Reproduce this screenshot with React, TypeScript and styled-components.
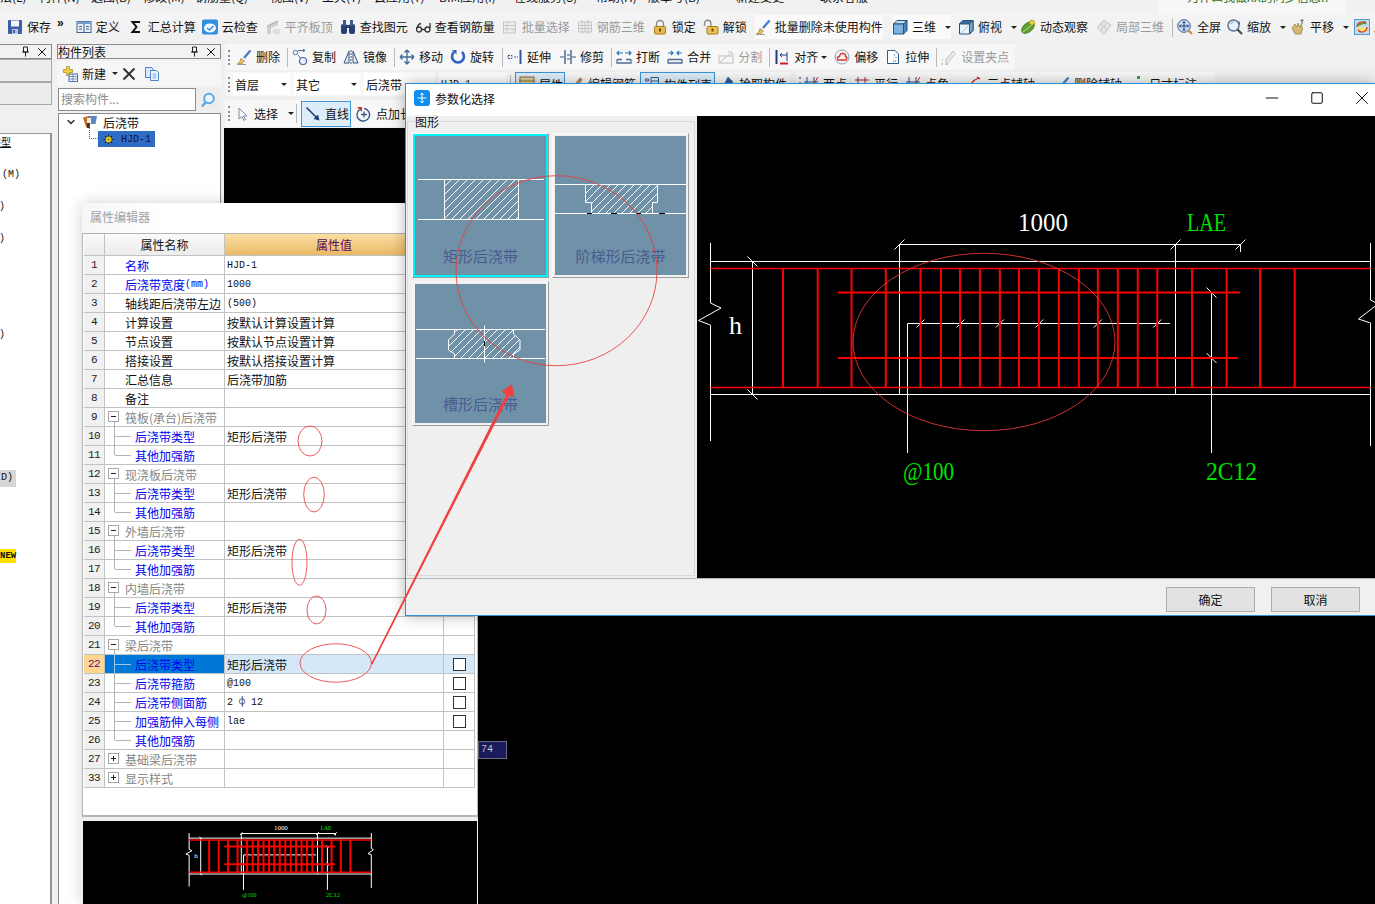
import React from "react";
import styled, { createGlobalStyle } from "styled-components";
import { ChevronDown, Minus, Square, X } from "lucide-react";

const CJK = `"Noto Sans CJK SC", "Noto Sans", sans-serif`;
const MONO = `"Liberation Mono", "DejaVu Sans Mono", "Noto Sans CJK SC", monospace`;

const Global = createGlobalStyle`
  html, body { margin: 0; padding: 0; background: #f0f0f0; }
  body { font-family: ${CJK}; font-size: 12px; color: #111; }
`;

const Screen = styled.div`
  position: relative;
  width: 1375px;
  height: 904px;
  overflow: hidden;
  display: flex;
  flex-direction: column;
  background: #f0f0f0;
`;

/* ---------- menu strip (cut off by the top of the picture) ---------- */
const MenuStrip = styled.div`
  height: 14px;
  flex: none;
  display: flex;
  overflow: hidden;
  position: relative;
  background: #f1f1f1;
`;
const MenuItem = styled.span<{ $x: number }>`
  flex: none;
  width: ${(p) => p.$x}px;
  margin-top: -12px;
  height: 18px;
  line-height: 18px;
  white-space: nowrap;
`;
const NewsBox = styled.div`
  position: absolute;
  left: 1158px;
  top: 0;
  width: 187px;
  height: 14px;
  background: #f7f7f7;
  overflow: hidden;
`;
const NewsText = styled.div`
  margin: -12px 0 0 29px;
  line-height: 18px;
  color: #2c6e12;
  white-space: nowrap;
`;

/* ---------- toolbars ---------- */
const MainBar = styled.div`
  height: 28px;
  box-sizing: border-box;
  padding: 0 0 2px 7px;
  flex: none;
  display: flex;
  align-items: center;
  background: linear-gradient(#f4f4f4, #f0f0f0);
  white-space: nowrap;
`;
const Tool = styled.div<{ $muted?: boolean; $after?: number; $white?: boolean }>`
  flex: none;
  display: inline-flex;
  align-items: center;
  gap: 4px;
  margin-right: ${(p) => p.$after ?? 7}px;
  height: 24px;
  color: ${(p) => (p.$muted ? "#9a9a9a" : "#141414")};
  background: ${(p) => (p.$white ? "#fafafa" : "transparent")};
  line-height: 16px;
  white-space: nowrap;
`;
const ToolGlyph = styled.svg<{ $small?: boolean }>`
  flex: none;
  width: ${(p) => (p.$small ? 11 : 16)}px;
  height: ${(p) => (p.$small ? 11 : 16)}px;
  display: block;
`;
const Caret = styled.i<{ $off?: number }>`
  flex: none;
  width: 0;
  height: 0;
  margin-left: ${(p) => p.$off ?? 5}px;
  border: 3px solid transparent;
  border-top: 3px solid #222;
  border-bottom: 0;
`;
const Sep = styled.i`
  flex: none;
  width: 1px;
  height: 19px;
  margin-right: 4px;
  background: #b9b9b9;
`;
const Grip = styled.i<{ $after?: number }>`
  flex: none;
  width: 0;
  height: 15px;
  margin: 0 ${(p) => p.$after ?? 6}px 0 3px;
  border-left: 2px dotted #8e8e8e;
`;
const More = styled.span`
  font: bold 12px "Liberation Sans", sans-serif;
  width: 8px;
  margin: -8px 12px 0 0;
`;
const LabelGap = styled.span`
  margin-left: 3px;
`;

const Workspace = styled.div`
  flex: 1;
  min-height: 0;
  display: flex;
  padding-top: 2px;
`;

/* ---------- docks ---------- */
const FarDock = styled.div`
  flex: none;
  width: 52px;
  display: flex;
  flex-direction: column;
`;
const DockHead = styled.div<{ $open?: boolean }>`
  flex: none;
  height: 13px;
  display: flex;
  align-items: center;
  justify-content: flex-end;
  gap: 5px;
  padding-right: 2px;
  border: 1px solid #8a8a8a;
  border-left-width: ${(p) => (p.$open ? 0 : 1)}px;
  line-height: 13px;
  background: #f2f2f2;
`;
const DockTitle = styled.span`
  margin-right: auto;
  font-size: 12px;
`;
const DockButton = styled.div`
  flex: none;
  height: 21px;
  border: 1px solid #a8a8a8;
  border-left: 0;
  background: #ececec;
`;
const FarList = styled.div`
  flex: 1;
  margin-top: 28px;
  border-top: 1px solid #9a9a9a;
  border-right: 2px solid #8e949c;
  background: #fff;
  display: flex;
  flex-direction: column;
  align-items: flex-start;
  overflow: hidden;
`;
const Cut = styled.span<{ $top: number; $left?: number; $gray?: boolean; $new?: boolean; $under?: boolean }>`
  margin-top: ${(p) => p.$top}px;
  margin-left: ${(p) => p.$left ?? 0}px;
  padding: ${(p) => (p.$gray ? "1px 3px 1px 0" : "0")};
  height: ${(p) => (p.$gray ? 15 : 14)}px;
  line-height: 14px;
  font-family: ${MONO};
  font-size: ${(p) => (p.$new ? 9 : 10)}px;
  font-weight: ${(p) => (p.$new ? 700 : 400)};
  background: ${(p) => (p.$gray ? "#d6d6d6" : p.$new ? "#ffe000" : "transparent")};
  text-decoration: ${(p) => (p.$under ? "underline" : "none")};
  white-space: nowrap;
`;

const ListDock = styled.div`
  flex: none;
  width: 164px;
  margin-left: 5px;
  display: flex;
  flex-direction: column;
`;
const ListBar = styled.div`
  flex: none;
  height: 25px;
  margin: 2px 0 1px;
  display: flex;
  align-items: center;
  padding-left: 5px;
  background: #f6f6f6;
`;
const Search = styled.div`
  flex: none;
  height: 23px;
  margin: 1px 1px 2px;
  display: flex;
`;
const SearchInput = styled.div`
  width: 138px;
  box-sizing: border-box;
  border: 1px solid #8a8a8a;
  background: #fff;
  padding-left: 2px;
  color: #8c8c8c;
  line-height: 20px;
  font-size: 12px;
`;
const SearchBtn = styled.div`
  flex: 1;
  display: flex;
  align-items: center;
  justify-content: center;
  background: #ededed;
`;
const Tree = styled.div`
  flex: 1;
  margin-left: 1px;
  border: 1px solid #8a8a8a;
  border-width: 1px 1px 0;
  background: #fff;
  padding: 0 0 0 6px;
`;
const TreeRow = styled.div`
  height: 16px;
  display: flex;
  align-items: center;
  gap: 5px;
`;
const TreeLeaf = styled.div`
  width: 57px;
  box-sizing: border-box;
  height: 16px;
  margin: 1px 0 0 33px;
  padding-left: 5px;
  display: flex;
  align-items: center;
  gap: 7px;
  background: #2f6dc4;
  color: #10103a;
  font: 10px ${MONO};
  position: relative;
  &::before {
    content: "";
    position: absolute;
    left: -9px;
    top: -6px;
    width: 8px;
    height: 13px;
    border-left: 1px dotted #666;
    border-bottom: 1px dotted #666;
  }
`;

/* ---------- drawing area ---------- */
const DrawArea = styled.div`
  flex: 1;
  min-width: 0;
  margin-left: 3px;
  display: flex;
  flex-direction: column;
`;
const Bar = styled.div<{ $h: number; $top?: number; $w?: number }>`
  flex: none;
  height: ${(p) => p.$h}px;
  width: ${(p) => (p.$w ? `${p.$w}px` : "auto")};
  margin: ${(p) => p.$top ?? 0}px 0 0 1px;
  display: flex;
  align-items: center;
  background: #f7f7f7;
  border-radius: 2px;
  white-space: nowrap;
`;
const BarLine = styled.div`
  flex: none;
  display: flex;
  margin-top: 2px;
  height: 24px;
`;
const SecondBar = styled(Bar)`
  margin-left: 6px;
  margin-top: 0;
  overflow: hidden;
`;
const Combo = styled.div<{ $w: number }>`
  flex: none;
  width: ${(p) => p.$w}px;
  box-sizing: border-box;
  height: 22px;
  margin-right: 4px;
  padding: 0 3px 0 2px;
  display: flex;
  align-items: center;
  justify-content: space-between;
  background: #fff;
  font-size: 12px;
`;
const Pressed = styled.div<{ $w: number; $h?: number; $after?: number }>`
  flex: none;
  width: ${(p) => p.$w}px;
  box-sizing: border-box;
  height: ${(p) => p.$h ?? 24}px;
  margin-right: ${(p) => p.$after ?? 5}px;
  padding-left: 3px;
  display: flex;
  align-items: center;
  gap: 4px;
  border: 1px solid #3d95d8;
  background: #dcecf8;
`;
const Canvas = styled.div`
  flex: 1;
  margin-top: 1px;
  background: #000;
`;

/* ---------- property window ---------- */
const PropWindow = styled.div`
  position: absolute;
  left: 82px;
  top: 203px;
  width: 396px;
  height: 701px;
  z-index: 2;
  display: flex;
  flex-direction: column;
  background: #f0f0f0;
  box-shadow: 0 0 14px rgba(0, 0, 0, 0.18);
`;
const PropTitle = styled.div`
  flex: none;
  height: 30px;
  box-sizing: border-box;
  padding: 5px 0 0 8px;
  line-height: 17px;
  font-size: 12px;
  color: #a2a2a2;
  background: linear-gradient(90deg, #f6f6f6, #fff 20%);
`;
const Sheet = styled.div`
  flex: none;
  height: 584px;
  box-sizing: border-box;
  padding: 0 2px 0 1px;
  background: #fff;
  border: 1px solid #b4b4b4;
  border-width: 1px 1px 2px 1px;
`;
const Row = styled.div`
  height: 19px;
  box-sizing: border-box;
  display: grid;
  grid-template-columns: 21px 120px 219px 31px;
  border-bottom: 1px solid #c2c2c2;
`;
const HeadRow = styled(Row)`
  height: 22px;
`;
const HeadCell = styled.div<{ $hot?: boolean }>`
  display: flex;
  align-items: center;
  justify-content: center;
  border-right: 1px solid #c2c2c2;
  font-size: 12px;
  color: ${(p) => (p.$hot ? "#5c0a5c" : "#111")};
  background: ${(p) =>
    p.$hot ? "linear-gradient(#fbdfa3, #e8b965)" : "linear-gradient(#fafafa, #ececec)"};
`;
const NumCell = styled.div<{ $on?: boolean }>`
  display: flex;
  align-items: center;
  justify-content: center;
  border-right: 1px solid #c2c2c2;
  background: ${(p) => (p.$on ? "#ffd68c" : "#f1f1f1")};
  color: ${(p) => (p.$on ? "#5c0a8c" : "#222")};
  font: 11px ${MONO};
  letter-spacing: -0.6px;
`;
const NameCell = styled.div<{ $tone: string; $pad: number; $on?: boolean }>`
  position: relative;
  padding-left: ${(p) => p.$pad}px;
  display: flex;
  align-items: center;
  border-right: 1px solid #c2c2c2;
  color: ${(p) => p.$tone};
  background: ${(p) => (p.$on ? "#0078d7" : "transparent")};
  white-space: nowrap;
  font-size: 12px;
`;
const Branch = styled.i<{ $last?: boolean; $on?: boolean }>`
  position: absolute;
  left: 9px;
  top: -1px;
  width: 16px;
  height: ${(p) => (p.$last ? 10 : 19)}px;
  border-left: 1px solid ${(p) => (p.$on ? "#9cc8ee" : "#b4b4b4")};
  &::after {
    content: "";
    position: absolute;
    left: 0;
    top: 10px;
    width: 16px;
    border-top: 1px solid ${(p) => (p.$on ? "#9cc8ee" : "#b4b4b4")};
  }
`;
const Expander = styled.i<{ $open?: boolean }>`
  position: absolute;
  left: 3px;
  top: 3px;
  width: 11px;
  height: 11px;
  box-sizing: border-box;
  border: 1px solid #a8a8a8;
  background: #fff;
  &::before {
    content: "";
    position: absolute;
    left: 2px;
    top: 4px;
    width: 5px;
    border-top: 1px solid #222;
  }
  &::after {
    content: "";
    position: absolute;
    left: 4px;
    top: 2px;
    height: 5px;
    border-left: 1px solid #222;
    display: ${(p) => (p.$open ? "none" : "block")};
  }
`;
const Stem = styled.i`
  position: absolute;
  left: 9px;
  top: 14px;
  height: 5px;
  border-left: 1px solid #b4b4b4;
`;
const ValueCell = styled.div<{ $on?: boolean }>`
  padding-left: 2px;
  display: flex;
  align-items: center;
  border-right: 1px solid #c2c2c2;
  background: ${(p) => (p.$on ? "#d5e8f7" : "transparent")};
  white-space: nowrap;
  font-size: 12px;
`;
const Latin = styled.span`
  font: 10px ${MONO};
`;
const TickCell = styled.div<{ $on?: boolean }>`
  display: flex;
  align-items: center;
  justify-content: center;
  border-right: 1px solid #c2c2c2;
  background: ${(p) => (p.$on ? "#d5e8f7" : "transparent")};
`;
const TickBox = styled.i`
  width: 11px;
  height: 11px;
  border: 1px solid #333;
  background: #fff;
`;
const Preview = styled.div`
  flex: 1;
  margin: 4px 1px 0;
  background: #000;
  min-height: 0;
`;
const Fill = styled.svg`
  display: block;
  width: 100%;
  height: 100%;
`;

/* ---------- parameter dialog ---------- */
const Dialog = styled.div`
  position: absolute;
  left: 405px;
  top: 83px;
  width: 970px;
  height: 533px;
  box-sizing: border-box;
  z-index: 3;
  display: flex;
  flex-direction: column;
  background: #f0f0f0;
  border: 1px solid #2f8fd8;
  border-right: 0;
  box-shadow: 0 0 14px rgba(0, 0, 0, 0.3);
`;
const DialogBar = styled.div`
  flex: none;
  height: 32px;
  box-sizing: border-box;
  display: flex;
  align-items: center;
  padding: 0 0 4px 8px;
  background: #fff;
  gap: 5px;
  font-size: 12px;
`;
const DialogIcon = styled.svg`
  width: 16px;
  height: 16px;
  flex: none;
`;
const WinButtons = styled.div`
  margin-left: auto;
  display: flex;
  gap: 19px;
`;
const WinButton = styled.div`
  width: 26px;
  height: 16px;
  display: flex;
  align-items: center;
  justify-content: center;
  color: #111;
`;
const DialogBody = styled.div`
  flex: 1;
  min-height: 0;
  display: flex;
`;
const ShapePane = styled.div`
  flex: none;
  width: 291px;
  box-sizing: border-box;
  padding: 5px 2px 2px 1px;
  background: #efefef;
`;
const Group = styled.div`
  position: relative;
  height: 100%;
  box-sizing: border-box;
  border: 1px solid #d9d9d9;
  padding: 11px 0 0 4px;
`;
const GroupLabel = styled.span`
  position: absolute;
  left: 7px;
  top: -7px;
  line-height: 14px;
  font-size: 12px;
  background: #efefef;
`;
const ShapeGrid = styled.div`
  display: grid;
  grid-template-columns: 137px 137px;
  grid-auto-rows: 145px;
  gap: 3px;
`;
const ShapeCard = styled.div<{ $on?: boolean }>`
  box-sizing: border-box;
  padding: ${(p) => (p.$on ? 0 : 2)}px;
  border: 1px solid;
  border-color: #fafafa #9c9c9c #9c9c9c #fafafa;
  background: #f2f2f2;
  display: flex;
`;
const ShapeFace = styled.div<{ $on?: boolean }>`
  flex: 1;
  border: ${(p) => (p.$on ? "2px solid #00f2ff" : "0")};
  background: #6f92a8;
  display: flex;
  flex-direction: column;
`;
const ShapeArt = styled.svg`
  flex: none;
  width: 131px;
  height: 100px;
  display: block;
`;
const ShapeName = styled.div`
  flex: 1;
  display: flex;
  align-items: center;
  justify-content: center;
  font-size: 15px;
  color: #4b5a8f;
  white-space: nowrap;
`;
const DialogCanvas = styled.div`
  flex: 1;
  min-width: 0;
  background: #000;
`;
const DialogFoot = styled.div`
  flex: none;
  height: 37px;
  box-sizing: border-box;
  display: flex;
  justify-content: flex-end;
  align-items: flex-start;
  padding: 8px 15px 0 0;
  gap: 16px;
  border-top: 1px solid #b4b4b4;
  background: #f0f0f0;
`;
const FootButton = styled.div`
  width: 87px;
  height: 23px;
  display: flex;
  align-items: center;
  justify-content: center;
  border: 1px solid #adadad;
  background: #e2e2e2;
  font-size: 12px;
`;
const CoordTag = styled.div`
  position: absolute;
  left: 478px;
  top: 741px;
  width: 29px;
  height: 18px;
  padding-left: 2px;
  box-sizing: border-box;
  border: 1px solid #6d6d80;
  background: #1b1b5e;
  color: #c8c8c8;
  font: 10px/15px ${MONO};
  z-index: 1;
`;
const Notes = styled.svg`
  position: absolute;
  left: 0;
  top: 0;
  width: 1375px;
  height: 904px;
  z-index: 5;
  pointer-events: none;
`;

/* ---------- icons ---------- */
const L = (p: React.SVGProps<SVGPathElement>) => <path fill="none" stroke="#3b5d8a" {...p} />;
const icons: Record<string, React.ReactNode> = {
  save: (<><rect x="1" y="1" width="14" height="14" rx="1" fill="#3e5da6" /><rect x="4" y="1.5" width="8" height="6" fill="#f1f4fa" /><rect x="5" y="10" width="6" height="5" fill="#b9c6de" /><rect x="6" y="11" width="2" height="3" fill="#3e5da6" /></>),
  table: (<><rect x="1" y="2.5" width="14" height="11" fill="#e6eef8" stroke="#3d608f" /><rect x="1" y="2.5" width="14" height="2.5" fill="#7b9cc8" /><L d="M8 5v8M3 7.5h3M3 10h3M10 7.5h3M10 10h3" /></>),
  sigma: <path d="M12 3H4.5L8.5 8L4.5 13H12" fill="none" stroke="#111" strokeWidth="2" />,
  cloud: (<><rect y="0.5" width="16" height="15" rx="2" fill="#2f90e2" /><ellipse cx="8" cy="9" rx="6" ry="4.5" fill="#f4faff" /><path d="M5 9l2.5 2L11.5 7" fill="none" stroke="#2f90e2" strokeWidth="1.5" /></>),
  level: (<><path d="M2 15V7L13 2V6L6 9V15Z" fill="#cfcfcf" /><rect x="8" y="10" width="7" height="5" fill="#dedede" /><path d="M2 7L13 2" stroke="#aaa" /></>),
  binoc: (<><rect x="1" y="5" width="6" height="10" rx="2" fill="#27406f" /><rect x="9" y="5" width="6" height="10" rx="2" fill="#27406f" /><rect x="3" y="1" width="3" height="6" fill="#3b5a8f" /><rect x="10" y="1" width="3" height="6" fill="#3b5a8f" /><rect x="6" y="6" width="4" height="3" fill="#27406f" /></>),
  rebarq: (<><circle cx="4" cy="10.5" r="2.5" fill="none" stroke="#333" strokeWidth="1.3" /><circle cx="12.5" cy="10.5" r="2.5" fill="none" stroke="#333" strokeWidth="1.3" /><path d="M2 9Q3 5 6 4.5M15 9V4M6.5 10.5H10" fill="none" stroke="#333" strokeWidth="1.3" /></>),
  batch: (<><rect x="1.5" y="3" width="12" height="11" fill="#eee" stroke="#c8c8c8" /><path d="M1.5 6.5H13.5M1.5 10H13.5M5 3V14" stroke="#c8c8c8" /><path d="M10 8L15 13L12 14Z" fill="#d6d6d6" /></>),
  cage: <path d="M1.5 3H14.5V13H1.5ZM5 1V15M11 1V15M1.5 6.5H14.5M1.5 9.5H14.5M8 3V13" fill="none" stroke="#c4c4c4" />,
  lock: (<><path d="M4.5 8V5a3.5 3.5 0 0 1 7 0V8" fill="none" stroke="#8a8a8a" strokeWidth="1.4" /><rect x="2.5" y="7.5" width="11" height="7.5" rx="1" fill="#e8bb50" stroke="#a67c20" /><rect x="7" y="9.5" width="2" height="3" fill="#6a4c10" /></>),
  unlock: (<><path d="M1.5 7V4.5a3.2 3.2 0 0 1 6.4 0V7.5" fill="none" stroke="#8a8a8a" strokeWidth="1.4" /><rect x="4" y="7.5" width="11" height="7.5" rx="1" fill="#eec058" stroke="#a67c20" /><rect x="8.5" y="9.5" width="2" height="3" fill="#6a4c10" /></>),
  brush: (<><path d="M8 9L14.5 1.5" stroke="#4a7fcc" strokeWidth="2.4" /><path d="M5 9.5L8.5 12L5.5 15H1.5Q4 13.5 5 9.5Z" fill="#e8c060" stroke="#8a6a20" strokeWidth=".6" /><path d="M1 15.5H10" stroke="#9a9a9a" /></>),
  cube: (<><path d="M1.5 5L5 1.5H15L11.5 5Z" fill="#bcdcf4" stroke="#25527c" /><path d="M11.5 5L15 1.5V11.5L11.5 15Z" fill="#4c86b8" stroke="#25527c" /><rect x="1.5" y="5" width="10" height="10" fill="#7db4e0" stroke="#25527c" /></>),
  cube2: (<><path d="M5 1.5H15V11.5L11.5 15H1.5V5Z" fill="#eaf3fb" stroke="#25527c" /><path d="M1.5 5L5 1.5H15L11.5 5Z" fill="#366d9e" stroke="#25527c" /><path d="M11.5 5V15L15 11.5V1.5Z" fill="#7aa6cc" stroke="#25527c" /><path d="M3 14L10 7" stroke="#9ec0de" /></>),
  orbit: (<><ellipse cx="8" cy="8.5" rx="7.5" ry="4.5" transform="rotate(-40 8 8.5)" fill="#5f9e2c" stroke="#2c6612" strokeWidth=".6" /><path d="M3 13L13 5" stroke="#bfe69a" /><circle cx="12" cy="3.5" r="2.5" fill="#e7d43c" stroke="#7c7020" strokeWidth=".5" /></>),
  local: (<><path d="M8 1L15 6L8 15L1 9Z" fill="#e4e4e4" stroke="#c6c6c6" /><path d="M4 4.5L11.5 11M11 3L4.5 12" stroke="#c6c6c6" /></>),
  fit: (<><circle cx="7" cy="7" r="6.3" fill="#cddcf3" stroke="#3a5f94" /><path d="M7 2.5V11.5M2.5 7H11.5M7 2.5L5.5 4M7 2.5L8.5 4M7 11.5L5.5 10M7 11.5L8.5 10M2.5 7L4 5.5M2.5 7L4 8.5M11.5 7L10 5.5M11.5 7L10 8.5" fill="none" stroke="#22467c" /><path d="M11.5 11.5L15 15" stroke="#d08a2a" strokeWidth="2" /></>),
  zoom: (<><circle cx="6.5" cy="6.5" r="5.5" fill="#e8f0fa" stroke="#58708f" strokeWidth="1.4" /><path d="M10.5 10.5L15 15" stroke="#4a4a4a" strokeWidth="2.2" /><path d="M3.5 5a3.5 3.5 0 0 1 3-2" fill="none" stroke="#7d9dc4" /><path d="M12 2.5v3" stroke="#3a5f94" strokeWidth="1.5" /></>),
  hand: (<><path d="M2 9L5 5L7 8L8 4L10 8L11.5 5L12.5 10L11 15H5Z" fill="#d5b872" stroke="#87693a" strokeWidth=".6" /><path d="M12 5V0.5M10.5 2L12 0.5L13.5 2" fill="none" stroke="#555" /></>),
  swap: (<><rect x="0.5" y="0.5" width="15" height="15" fill="#bcdcf0" stroke="#5d9ac8" /><rect x="3" y="8" width="10" height="5" fill="#efe280" /><path d="M4 6L12 3" stroke="#58a030" strokeWidth="2" /><path d="M3 8a5 5 0 0 1 9-3M13 8a5 5 0 0 1-9 3" fill="none" stroke="#d8362a" strokeWidth="1.3" /></>),
  copy: (<><circle cx="3.5" cy="3.5" r="2.2" fill="#fff" stroke="#4d6e9a" /><circle cx="11" cy="12" r="3.5" fill="#eef" stroke="#4d6e9a" strokeWidth="1.2" /><path d="M6 1.5L13 1.5M11 0L13 1.5L11 3M6 6L8.5 9" fill="none" stroke="#4d6e9a" /></>),
  mirror: (<><path d="M6 2V14H1Z" fill="#e0eaf6" stroke="#38587f" /><path d="M10 2V14H15Z" fill="#e0eaf6" stroke="#38587f" /><path d="M8 1V15" stroke="#38587f" strokeDasharray="2 1" /></>),
  move: <path d="M8 1V15M1 8H15M8 1L5.5 3.5M8 1L10.5 3.5M8 15L5.5 12.5M8 15L10.5 12.5M1 8L3.5 5.5M1 8L3.5 10.5M15 8L12.5 5.5M15 8L12.5 10.5" fill="none" stroke="#3c6a9a" strokeWidth="1.3" />,
  rotate: (<><path d="M4 3A6 6 0 1 0 12 3" fill="none" stroke="#2f62c0" strokeWidth="2.6" /><path d="M2 1H6.5V5.5Z" fill="#2f62c0" /></>),
  extend: (<><path d="M1 6.5H5V9.5H1ZM7 8H11" fill="none" stroke="#2a5da0" strokeDasharray="2 1" /><path d="M13.5 1V15" stroke="#2a5da0" strokeWidth="2" /></>),
  trim: (<><path d="M5 1V15M11 1V15" stroke="#38587f" strokeWidth="1.3" /><path d="M0 8H4M7 6H10M7 10H10M12 8H16" stroke="#38587f" /></>),
  cut: (<><path d="M1 4H7M9 4H15M3 2L1 4L3 6M13 2L15 4L13 6" fill="none" stroke="#2a76c0" strokeWidth="1.2" /><path d="M1 10.5V14H15V10.5M1 10.5H6M10 10.5H15" fill="none" stroke="#4d6e9a" strokeWidth="1.3" /></>),
  merge: (<><path d="M1 4H6M10 4H15M4 2L6 4L4 6M12 2L10 4L12 6" fill="none" stroke="#2a76c0" strokeWidth="1.2" /><path d="M1 10.5V14H15V10.5M1 10.5H15" fill="none" stroke="#4d6e9a" strokeWidth="1.3" /></>),
  split: (<><path d="M1 14V7H15V14ZM1 14L14 3" fill="none" stroke="#cfcfcf" strokeWidth="1.3" /><path d="M10 2L15 4L13 8" fill="#e6e6e6" stroke="#cfcfcf" /></>),
  align: (<><path d="M2.5 1V15" stroke="#1c3d82" strokeWidth="2" /><path d="M6 14.5H14" stroke="#c82020" strokeWidth="2" /><path d="M6 6H13M8 4L6 6L8 8" fill="none" stroke="#1c3d82" /><path d="M13 3V12" stroke="#1c3d82" /></>),
  offset: (<><circle cx="8" cy="8" r="7" fill="#f3f3f3" stroke="#8da0b8" /><path d="M4 11Q2 8 5.5 7.5Q6 4 9 4.5Q12 5 11.5 7.5Q14 8.5 12 11Z" fill="none" stroke="#d8362a" strokeWidth="1.4" /></>),
  stretch: (<><path d="M2.5 1.5H10L13.5 5V14.5H2.5Z" fill="#fff" stroke="#2f5a8a" /><path d="M9 6H11M11 8V10M8 12H11" stroke="#2f5a8a" strokeDasharray="1 1" /></>),
  grippen: (<><path d="M4 12L12 2L14.5 4.5L6.5 14Z" fill="#e8e8e8" stroke="#c6c6c6" /><path d="M0 15H2M4 15H7M1 11H2" stroke="#bcbcbc" strokeWidth="1.3" /></>),
  pointer: <path d="M5 2V13L8 10.5L10 14.5L11.5 13.5L9.5 10H13Z" fill="#f4f7fb" stroke="#7e8fa6" />,
  line: (<><path d="M1.5 1.5L13 13" stroke="#1f3f74" strokeWidth="1.6" /><path d="M14.5 14.5L8.5 13L13 8.5Z" fill="#1f3f74" /></>),
  lengthen: (<><path d="M3.6 3.6A6.3 6.3 0 1 0 8 2.5" fill="none" stroke="#39598a" strokeWidth="1.4" /><path d="M1 1H6V6Z" fill="#c83030" /><path d="M8 5.5V11.5M5 8.5H11" stroke="#39598a" strokeWidth="1.3" /></>),
  add: (<><path d="M4.5 0.5H7.5V3.5H10.5V6.5H7.5V9.5H4.5V6.5H1.5V3.5H4.5Z" fill="#f0d040" stroke="#a08820" strokeWidth=".7" /><rect x="7" y="8" width="8.5" height="7.5" fill="#eef3fa" stroke="#4d74a8" /><path d="M7 10.5H15.5M7 13H15.5M11 8V15.5" stroke="#4d74a8" strokeWidth=".7" /></>),
  del: <path d="M2.5 2.5L13.5 13.5M13.5 2.5L2.5 13.5" stroke="#333" strokeWidth="2" />,
  docs: (<><path d="M1.5 1.5H8L9 3V11.5H1.5Z" fill="#dce9f8" stroke="#4d86c8" /><path d="M6.5 4.5H12.5L14.5 6.5V14.5H6.5Z" fill="#f1f6fc" stroke="#4d86c8" /><path d="M8.5 8H12.5M8.5 10H12.5M8.5 12H12.5" stroke="#4d86c8" strokeWidth=".7" /></>),
  search: (<><circle cx="9" cy="6.5" r="4.8" fill="#eff7fe" stroke="#58a8e8" strokeWidth="2" /><path d="M5.5 10.5L2 14.5" stroke="#58a8e8" strokeWidth="2.4" /></>),
  folder: (<><path d="M6 2H15L13.5 10H6Z" fill="#5f86be" /><path d="M1 3.5L7 2V14L4 13Z" fill="#c06a28" /><path d="M5 4H9V12H5Z" fill="#f1efe9" /><rect x="5" y="9" width="3" height="5" fill="#3d2f24" /></>),
  star: (<><path d="M8 1V15M1 8H15M3 3L13 13M13 3L3 13" stroke="#1c1c1c" strokeWidth="1.5" /><circle cx="8" cy="8" r="4.5" fill="#ffe400" stroke="#222" strokeWidth=".6" /><path d="M5 8H11M8 5V11" stroke="#222" strokeWidth=".5" /></>),
  prop: (<><rect x="1" y="4" width="14" height="11" fill="#f1d690" stroke="#8a6c30" /><rect x="1" y="1" width="14" height="4" fill="#d9c8a2" stroke="#8a6c30" /></>),
  pen: <path d="M3 14L12 2L14 3.5L6 15Z" fill="#d98c50" stroke="#7a5028" strokeWidth=".7" />,
  list: <path d="M1.5 3H4.5V5H1.5ZM7 1.5H14.5V14.5H7ZM7 5H14.5M7 8.5H14.5" fill="none" stroke="#3b5d8a" />,
  pick: <path d="M9 1L14 6L10 8L8 14L3 15L5 9Z" fill="#2f5aa0" stroke="#1c3a6c" strokeWidth=".5" />,
  twoa: (<><path d="M4 1V15M11 1V15M1 6H15" stroke="#2c4f8c" /><path d="M9 11L15 1" stroke="#c82020" /></>),
  twob: <path d="M4 1V15M11 1V15M1 4H15M1 11H15" stroke="#a02828" />,
  arcp: <path d="M2 15Q3 5 12 2M10 1L13 3" fill="none" stroke="#c82020" strokeWidth="1.3" />,
  dim: (<><rect x="0" y="12" width="3" height="3" fill="#3aa050" /><rect x="8" y="0" width="3" height="3" fill="#3aa050" /></>),
};
const Ico = ({ n }: { n: string }) => <ToolGlyph viewBox="0 0 16 16">{icons[n]}</ToolGlyph>;

function PinMark() {
  return (
    <svg width="9" height="11" viewBox="0 0 9 11">
      <path d="M2.5 1H6.5V6H2.5ZM1 6H8M4.5 6V10.5" fill="none" stroke="#222" />
    </svg>
  );
}

type ToolSpec =
  | { sep: true }
  | { icon: string; label: string; muted?: boolean; drop?: number; after?: number; white?: boolean };

const renderTools = (list: ToolSpec[]) =>
  list.map((t, i) =>
    "sep" in t ? (
      <Sep key={i} />
    ) : (
      <Tool key={i} $muted={t.muted} $after={t.after} $white={t.white}>
        <Ico n={t.icon} />
        {t.label}
        {t.drop !== undefined && <Caret $off={t.drop} />}
      </Tool>
    )
  );

const mainTools: ToolSpec[] = [
  { icon: "table", label: "定义", after: 8 },
  { icon: "sigma", label: "汇总计算", after: 6 },
  { icon: "cloud", label: "云检查" },
  { icon: "level", label: "平齐板顶", muted: true },
  { icon: "binoc", label: "查找图元" },
  { icon: "rebarq", label: "查看钢筋量" },
  { icon: "batch", label: "批量选择", muted: true },
  { icon: "cage", label: "钢筋三维", muted: true },
  { icon: "lock", label: "锁定" },
  { icon: "unlock", label: "解锁", after: 8 },
  { icon: "brush", label: "批量删除未使用构件", white: true, after: 9 },
  { icon: "cube", label: "三维", drop: 5, white: true },
  { icon: "cube2", label: "俯视", drop: 5, after: 3 },
  { icon: "orbit", label: "动态观察", after: 8 },
  { icon: "local", label: "局部三维", after: 8, muted: true },
  { sep: true },
  { icon: "fit", label: "全屏", after: 6 },
  { icon: "zoom", label: "缩放", drop: 5, after: 4 },
  { icon: "hand", label: "平移", drop: 5, after: 5 },
  { icon: "swap", label: "局部" },
];
const editTools: ToolSpec[] = [
  { icon: "brush", label: "删除" },
  { sep: true },
  { icon: "copy", label: "复制" },
  { icon: "mirror", label: "镜像" },
  { sep: true },
  { icon: "move", label: "移动" },
  { icon: "rotate", label: "旋转", after: 8 },
  { sep: true },
  { icon: "extend", label: "延伸", after: 9 },
  { icon: "trim", label: "修剪" },
  { sep: true },
  { icon: "cut", label: "打断" },
  { icon: "merge", label: "合并" },
  { icon: "split", label: "分割", muted: true },
  { sep: true },
  { icon: "align", label: "对齐", drop: -1 },
  { icon: "offset", label: "偏移" },
  { icon: "stretch", label: "拉伸" },
  { sep: true },
  { icon: "grippen", label: "设置夹点", muted: true },
];
const axisTools: ToolSpec[] = [
  { icon: "twoa", label: "两点" },
  { icon: "twob", label: "平行" },
  { icon: "twoa", label: "点角", drop: 5, after: 3 },
  { icon: "arcp", label: "三点辅轴", drop: 5, after: 4 },
  { icon: "brush", label: "删除辅轴" },
  { icon: "dim", label: "尺寸标注", drop: 5 },
];

const menu: [string, number][] = [
  ["法(L)", 39], ["构件(N)", 52], ["选图(B)", 52], ["修改(M)", 52], ["钢筋量(Q)", 75], ["视图(V)", 52],
  ["工具(T)", 52], ["云应用(Y)", 65], ["BIM应用(I)", 75], ["在线服务(S)", 82], ["帮助(H)", 52], ["版本号(B)", 88], ["新建变更", 84], ["联系客服", 80],
];

/* ---------- property data ---------- */
type Kind = "blue" | "plain" | "group" | "child" | "last";
type PropRow = { n: number; name: React.ReactNode; kind: Kind; value?: React.ReactNode; check?: boolean; on?: boolean; closed?: boolean };
const T = "矩形后浇带";
const rows: PropRow[] = [
  { n: 1, name: "名称", kind: "blue", value: <Latin>HJD-1</Latin> },
  { n: 2, name: <>后浇带宽度<Latin>(mm)</Latin></>, kind: "blue", value: <Latin>1000</Latin> },
  { n: 3, name: "轴线距后浇带左边", kind: "plain", value: <Latin>(500)</Latin> },
  { n: 4, name: "计算设置", kind: "plain", value: "按默认计算设置计算" },
  { n: 5, name: "节点设置", kind: "plain", value: "按默认节点设置计算" },
  { n: 6, name: "搭接设置", kind: "plain", value: "按默认搭接设置计算" },
  { n: 7, name: "汇总信息", kind: "plain", value: "后浇带加筋" },
  { n: 8, name: "备注", kind: "plain" },
  { n: 9, name: "筏板(承台)后浇带", kind: "group" },
  { n: 10, name: "后浇带类型", kind: "child", value: T },
  { n: 11, name: "其他加强筋", kind: "last" },
  { n: 12, name: "现浇板后浇带", kind: "group" },
  { n: 13, name: "后浇带类型", kind: "child", value: T },
  { n: 14, name: "其他加强筋", kind: "last" },
  { n: 15, name: "外墙后浇带", kind: "group" },
  { n: 16, name: "后浇带类型", kind: "child", value: T },
  { n: 17, name: "其他加强筋", kind: "last" },
  { n: 18, name: "内墙后浇带", kind: "group" },
  { n: 19, name: "后浇带类型", kind: "child", value: T },
  { n: 20, name: "其他加强筋", kind: "last" },
  { n: 21, name: "梁后浇带", kind: "group" },
  { n: 22, name: "后浇带类型", kind: "child", value: T, check: true, on: true },
  { n: 23, name: "后浇带箍筋", kind: "child", value: <Latin>@100</Latin>, check: true },
  { n: 24, name: "后浇带侧面筋", kind: "child", value: <Latin>2 ⌽ 12</Latin>, check: true },
  { n: 25, name: "加强筋伸入每侧", kind: "child", value: <Latin>lae</Latin>, check: true },
  { n: 26, name: "其他加强筋", kind: "last" },
  { n: 27, name: "基础梁后浇带", kind: "group", closed: true },
  { n: 33, name: "显示样式", kind: "group", closed: true },
];
const toneOf = (k: Kind) => (k === "plain" ? "#111" : k === "group" ? "#868686" : "#0000f0");
const padOf = (k: Kind) => (k === "child" || k === "last" ? 30 : 20);

/* ---------- the beam drawing ---------- */
const fx = (z: number) => 695 + z / 2.306;
const redBars = [203, 283, 361, 440, 520, 567, 611, 657, 703, 747, 793, 839, 885, 929, 975, 1021, 1066, 1146, 1226, 1303, 1383].map(fx);
const leaderTicks = [520, 612, 703, 794, 929, 1066].map(fx);
const W = "#fff";
const R = "#f00";
const G = "#00e000";
const Beam = () => {
  const v = { vectorEffect: "non-scaling-stroke" as const };
  const tick = (x: number, y: number, k: number, s = 5) => (
    <path key={`${x}-${y}`} d={`M${x - s} ${y + s * k}L${x + s} ${y - s * k}`} stroke={W} {...v} fill="none" />
  );
  return (
    <g>
      <path d="M710.5 243V303L721 308L698.5 320.5L710.5 325V441" stroke={W} fill="none" {...v} />
      <path d="M1370.5 243V300L1378 304L1358.5 319L1370.5 323V446" stroke={W} fill="none" {...v} />
      <path d="M710.5 261.5H1370.5M710.5 394.5H1370.5M752.5 261.5V394.5M899.5 244.5V394.5M1175.5 244.5V394.5M899.5 244.5H1240.5M1240.5 244.5V252M907.5 453V323.5H1170M1211.5 453V292.5" stroke={W} fill="none" {...v} />
      {tick(899.5, 244.5, 1)}
      {tick(1175.5, 244.5, 1)}
      {tick(1240.5, 244.5, 1)}
      {tick(752.5, 261.5, -1)}
      {tick(752.5, 394.5, -1)}
      {tick(1211.5, 292.5, -1)}
      {tick(1211.5, 358, -1)}
      {leaderTicks.map((x) => tick(x, 323.5, 1, 4))}
      <path d="M710.5 268.5H1370.5M710.5 387.5H1370.5" stroke={R} fill="none" strokeWidth={1.5} {...v} />
      <path d="M838 292.5H1240M838 358H1238" stroke={R} fill="none" strokeWidth={2} {...v} />
      {redBars.map((x) => (
        <path key={x} d={`M${x} 268V387`} stroke={R} strokeWidth={2} {...v} />
      ))}
      <g fontFamily={`"Liberation Serif", serif`} fontSize="26">
        <text x="1018" y="231" fill={W} textLength="50" lengthAdjust="spacingAndGlyphs">1000</text>
        <text x="1187" y="231" fill={G} textLength="39" lengthAdjust="spacingAndGlyphs">LAE</text>
        <text x="729" y="334" fill={W}>h</text>
        <text x="903" y="480" fill={G} textLength="51" lengthAdjust="spacingAndGlyphs">@100</text>
        <text x="1206" y="480" fill={G} textLength="51" lengthAdjust="spacingAndGlyphs">2C12</text>
      </g>
    </g>
  );
};

const Hatch = ({ id }: { id: string }) => (
  <defs>
    <pattern id={id} width="8" height="8" patternUnits="userSpaceOnUse">
      <path d="M-2 2L2 -2M0 8L8 0M6 10L10 6" stroke="#fff" strokeWidth="1" />
    </pattern>
  </defs>
);

export default function App() {
  return (
    <Screen>
      <Global />
      <MenuStrip>
        {menu.map(([t, x]) => (
          <MenuItem key={t} $x={x}>{t}</MenuItem>
        ))}
        <NewsBox>
          <NewsText>为什么我做XX的同步信息!!</NewsText>
        </NewsBox>
      </MenuStrip>

      <MainBar>
        <Tool $after={6}><Ico n="save" />保存</Tool>
        <More>»</More>
        {renderTools(mainTools)}
      </MainBar>

      <Workspace>
        <FarDock>
          <DockHead $open>
            <PinMark />
            <X size={14} strokeWidth={1} absoluteStrokeWidth />
          </DockHead>
          <DockButton />
          <DockButton />
          <FarList>
            <Cut $top={3} $left={-9} $under>类型</Cut>
            <Cut $top={17} $left={2}>(M)</Cut>
            <Cut $top={18} $left={-1}>)</Cut>
            <Cut $top={18} $left={-1}>)</Cut>
            <Cut $top={82} $left={-1}>)</Cut>
            <Cut $top={128} $left={-5} $gray>ID)</Cut>
            <Cut $top={62} $new>NEW</Cut>
          </FarList>
        </FarDock>

        <ListDock>
          <DockHead>
            <DockTitle>构件列表</DockTitle>
            <PinMark />
            <X size={14} strokeWidth={1} absoluteStrokeWidth />
          </DockHead>
          <ListBar>
            <Tool $after={3}><Ico n="add" />新建<Caret $off={2} /></Tool>
            <Tool $after={7}><Ico n="del" /></Tool>
            <Tool><Ico n="docs" /></Tool>
          </ListBar>
          <Search>
            <SearchInput>搜索构件...</SearchInput>
            <SearchBtn><Ico n="search" /></SearchBtn>
          </Search>
          <Tree>
            <TreeRow>
              <ChevronDown size={12} strokeWidth={3} color="#333" />
              <Ico n="folder" />
              后浇带
            </TreeRow>
            <TreeLeaf>
              <ToolGlyph $small viewBox="0 0 16 16">{icons.star}</ToolGlyph>
              HJD-1
            </TreeLeaf>
          </Tree>
        </ListDock>

        <DrawArea>
          <Bar $h={26} $w={790}>
            <Grip />
            {renderTools(editTools)}
          </Bar>
          <BarLine>
            <Bar $h={24} $w={565}>
              <Grip $after={3} />
              <Combo $w={57}>首层<Caret $off={0} /></Combo>
              <Combo $w={66}>其它<Caret $off={0} /></Combo>
              <Combo $w={71}>后浇带<Caret $off={0} /></Combo>
              <Combo $w={67}><Latin>HJD-1</Latin><Caret $off={0} /></Combo>
              <Sep />
              <Pressed $w={50} $after={3}><Ico n="prop" />属性</Pressed>
              <Tool $after={4}><Ico n="pen" />编辑钢筋</Tool>
              <Pressed $w={75} $after={4}><Ico n="list" />构件列表</Pressed>
              <Tool $after={0}><Ico n="pick" />拾取构件</Tool>
            </Bar>
            <SecondBar $h={24} $w={419}>
              <Grip $after={2} />
              {renderTools(axisTools)}
            </SecondBar>
          </BarLine>
          <Bar $h={27} $top={4} $w={700}>
            <Grip $after={4} />
            <Tool $after={2}><Ico n="pointer" />选择<Caret $off={6} /></Tool>
            <Sep />
            <Pressed $w={50} $h={26}><Ico n="line" />直线</Pressed>
            <Tool><Ico n="lengthen" />点加长度</Tool>
          </Bar>
          <Canvas />
        </DrawArea>
      </Workspace>

      <CoordTag>74</CoordTag>

      <PropWindow>
        <PropTitle>属性编辑器</PropTitle>
        <Sheet>
          <HeadRow>
            <HeadCell />
            <HeadCell>属性名称</HeadCell>
            <HeadCell $hot>属性值</HeadCell>
            <HeadCell />
          </HeadRow>
          {rows.map((r) => (
            <Row key={r.n}>
              <NumCell $on={r.on}>{r.n}</NumCell>
              <NameCell $tone={toneOf(r.kind)} $pad={padOf(r.kind)} $on={r.on}>
                {(r.kind === "child" || r.kind === "last") && <Branch $last={r.kind === "last"} $on={r.on} />}
                {r.kind === "group" && <Expander $open={!r.closed} />}
                {r.kind === "group" && !r.closed && <Stem />}
                {r.name}
              </NameCell>
              <ValueCell $on={r.on}>{r.value}</ValueCell>
              <TickCell $on={r.on}>{r.check && <TickBox />}</TickCell>
            </Row>
          ))}
        </Sheet>
        <Preview>
          <Fill viewBox="83 821 394 83">
            <g transform={`translate(${189 - 710 * 0.276},${838 - 261 * 0.27}) scale(0.276 0.27)`}>
              <Beam />
            </g>
          </Fill>
        </Preview>
      </PropWindow>

      <Dialog>
        <DialogBar>
          <DialogIcon viewBox="0 0 16 16">
            <rect width="16" height="16" rx="3" fill="#0d8ef0" />
            <path d="M8 3V13M3.5 8H12.5M8 3L6.3 4.7M8 3L9.7 4.7M8 13L6.3 11.3M8 13L9.7 11.3" fill="none" stroke="#fff" />
          </DialogIcon>
          参数化选择
          <WinButtons>
            <WinButton><Minus size={20} strokeWidth={1} absoluteStrokeWidth /></WinButton>
            <WinButton><Square size={14} strokeWidth={1} absoluteStrokeWidth /></WinButton>
            <WinButton><X size={22} strokeWidth={1} absoluteStrokeWidth /></WinButton>
          </WinButtons>
        </DialogBar>
        <DialogBody>
          <ShapePane>
            <Group>
              <GroupLabel>图形</GroupLabel>
              <ShapeGrid>
                <ShapeCard $on>
                  <ShapeFace $on>
                    <ShapeArt viewBox="0 0 131 100">
                      <Hatch id="h1" />
                      <rect x="29.5" y="43.5" width="74" height="40" fill="url(#h1)" stroke="#fff" />
                      <path d="M3 43.5H129M3 83.5H129" stroke="#fff" />
                    </ShapeArt>
                    <ShapeName>矩形后浇带</ShapeName>
                  </ShapeFace>
                </ShapeCard>
                <ShapeCard>
                  <ShapeFace>
                    <ShapeArt viewBox="0 0 131 100">
                      <Hatch id="h2" />
                      <path d="M30.5 48.5H102.5V66.5H97.5V77.5H36.5V66.5H30.5Z" fill="url(#h2)" stroke="#fff" />
                      <path d="M0 48.5H131M0 77.5H131" stroke="#fff" />
                      <path d="M32 77.5H37M56 77.5H62M81 77.5H86M104 77.5H110" stroke="#000" />
                    </ShapeArt>
                    <ShapeName>阶梯形后浇带</ShapeName>
                  </ShapeFace>
                </ShapeCard>
                <ShapeCard>
                  <ShapeFace>
                    <ShapeArt viewBox="0 0 131 100">
                      <Hatch id="h3" />
                      <path d="M39.5 45.5H98.5V50L105 56V66L98.5 70V74.5H39.5V70L33.5 66V56L39.5 50Z" fill="url(#h3)" stroke="#fff" />
                      <path d="M1 45.5H130M1 74.5H130M69.5 41.5V78.5" stroke="#fff" />
                      <path d="M69.5 57V62" stroke="#000" />
                    </ShapeArt>
                    <ShapeName>槽形后浇带</ShapeName>
                  </ShapeFace>
                </ShapeCard>
              </ShapeGrid>
            </Group>
          </ShapePane>
          <DialogCanvas>
            <Fill viewBox="697 116 678 462">
              <Beam />
            </Fill>
          </DialogCanvas>
        </DialogBody>
        <DialogFoot>
          <FootButton>确定</FootButton>
          <FootButton>取消</FootButton>
        </DialogFoot>
      </Dialog>

      <Notes viewBox="0 0 1375 904">
        <g fill="none" stroke="#ee3b3b" strokeWidth="1" opacity="0.85">
          <ellipse cx="556.5" cy="270.7" rx="100.5" ry="95" />
          <ellipse cx="984" cy="342" rx="131" ry="88.7" />
          <ellipse cx="310" cy="441" rx="12" ry="15" />
          <ellipse cx="314" cy="494.6" rx="10.3" ry="17.4" />
          <ellipse cx="299.5" cy="562.3" rx="7.5" ry="23" />
          <ellipse cx="316.5" cy="610" rx="9.5" ry="14" />
          <ellipse cx="335.7" cy="663" rx="35.7" ry="19.2" />
        </g>
        <polygon points="371,664 506,395 502,391.5 512,384 514,397 509,396 372.5,664.5" fill="#f24040" />
      </Notes>
    </Screen>
  );
}
